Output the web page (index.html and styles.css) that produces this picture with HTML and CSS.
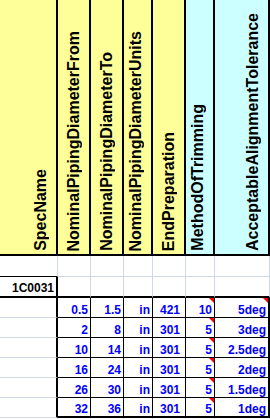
FILE: index.html
```html
<!DOCTYPE html>
<html>
<head>
<meta charset="utf-8">
<link rel="stylesheet" href="styles.css">
</head>
<body>
<div class="sheet">
  <div class="c h"><span>SpecName</span></div>
  <div class="c h"><span>NominalPipingDiameterFrom</span></div>
  <div class="c h"><span>NominalPipingDiameterTo</span></div>
  <div class="c h"><span>NominalPipingDiameterUnits</span></div>
  <div class="c h"><span>EndPreparation</span></div>
  <div class="c h cy"><span>MethodOfTrimming</span></div>
  <div class="c h cy"><span>AcceptableAlignmentTolerance</span></div>

  <div class="c above-spec"></div>
  <div class="c"></div><div class="c"></div><div class="c"></div><div class="c"></div><div class="c"></div><div class="c"></div>

  <div class="c spec">1C0031</div>
  <div class="c top-data"></div><div class="c top-data"></div><div class="c top-data"></div><div class="c top-data"></div><div class="c top-data"></div><div class="c top-data"></div>

  <div class="c lead"></div>
  <div class="c d">0.5</div><div class="c d">1.5</div><div class="c d">in</div><div class="c d e">421</div><div class="c d note">10</div><div class="c d last note">5deg</div>

  <div class="c lead"></div>
  <div class="c d">2</div><div class="c d">8</div><div class="c d">in</div><div class="c d e">301</div><div class="c d note">5</div><div class="c d last">3deg</div>

  <div class="c lead"></div>
  <div class="c d">10</div><div class="c d">14</div><div class="c d">in</div><div class="c d e">301</div><div class="c d note">5</div><div class="c d last">2.5deg</div>

  <div class="c lead"></div>
  <div class="c d">16</div><div class="c d">24</div><div class="c d">in</div><div class="c d e">301</div><div class="c d note">5</div><div class="c d last">2deg</div>

  <div class="c lead"></div>
  <div class="c d">26</div><div class="c d">30</div><div class="c d">in</div><div class="c d e">301</div><div class="c d note">5</div><div class="c d last">1.5deg</div>

  <div class="c lead"></div>
  <div class="c d bot">32</div><div class="c d bot">36</div><div class="c d bot">in</div><div class="c d e bot">301</div><div class="c d note bot">5</div><div class="c d last bot">1deg</div>

  <div class="c"></div><div class="c"></div><div class="c"></div><div class="c"></div><div class="c"></div><div class="c"></div><div class="c"></div>
</div>
</body>
</html>
```
FILE: styles.css
```css
html, body {
  margin: 0;
  padding: 0;
  background: #ffffff;
  height: 419px;
  overflow: hidden;
}

.sheet {
  display: grid;
  grid-template-columns: 58px 33px 33px 29px 33px 29px 55px;
  grid-template-rows: 256px 21px 21px repeat(6, 20px) 20px;
  font-family: "Liberation Sans", Arial, sans-serif;
}

.c {
  box-sizing: border-box;
  border-right: 1px solid #d0d7e5;
  border-bottom: 1px solid #d0d7e5;
  background: #ffffff;
}

.h {
  background: #ffff99;
  border-right: 2px solid #000;
  border-bottom: 2px solid #000;
  display: flex;
  justify-content: flex-end;
  align-items: flex-end;
  padding: 0 7px 3px 0;
}

.h.cy {
  background: #ccffff;
}

.h span {
  writing-mode: vertical-rl;
  transform: rotate(180deg);
  font-weight: bold;
  font-size: 16px;
  line-height: 16px;
  white-space: nowrap;
  color: #000;
}

.above-spec {
  border-bottom: 1px solid #000;
}

.spec {
  border-right: 2px solid #000;
  border-bottom: 2px solid #000;
  display: flex;
  justify-content: flex-end;
  align-items: flex-end;
  padding: 0 2px 1px 0;
  font-weight: bold;
  font-size: 12px;
  line-height: 14px;
  color: #000;
}

.top-data {
  border-bottom: 2px solid #000;
}

.lead {
  border-right: 2px solid #000;
}

.d {
  position: relative;
  border-right: 1px solid #000;
  border-bottom: 1px solid #000;
  display: flex;
  justify-content: flex-end;
  align-items: flex-end;
  padding-right: 2px;
  font-weight: bold;
  font-size: 12px;
  line-height: 14px;
  color: #0000ff;
}

.d.e {
  padding-right: 5px;
}

.d.last {
  border-right: 2px solid #000;
}

.d.bot {
  border-bottom: 2px solid #000;
}

.note::after {
  content: "";
  position: absolute;
  top: 0;
  right: 0;
  width: 0;
  height: 0;
  border-top: 5px solid #ff0000;
  border-left: 5px solid transparent;
}
```
